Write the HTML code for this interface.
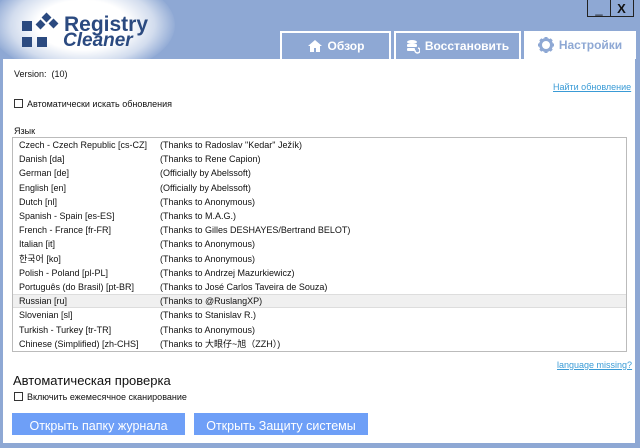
<!DOCTYPE html>
<html><head><meta charset="utf-8"><style>
*{margin:0;padding:0;box-sizing:border-box}
body{width:640px;height:448px;background:#8ea8d4;font-family:"Liberation Sans","Noto Sans CJK SC",sans-serif;position:relative;overflow:hidden;color:#111}
.glow{position:absolute;left:-10px;top:-25px;width:185px;height:100px;border-radius:50%;background:radial-gradient(ellipse at center,#fff 35%,rgba(255,255,255,0.6) 55%,rgba(142,168,212,0) 72%)}
.sq{position:absolute;background:#2b4a80}
.logo1{position:absolute;left:64px;top:13px;font-size:21px;font-weight:bold;color:#2b4a80;font-family:"Liberation Sans",sans-serif;letter-spacing:0px}
.logo2{position:absolute;left:63px;top:30px;font-size:19px;font-weight:bold;font-style:italic;color:#2b4a80;font-family:"Liberation Sans",sans-serif}
.wb{position:absolute;top:0;width:24px;height:17px;border:1px solid #222;border-top:none;font-weight:bold;font-size:13px;text-align:center;line-height:17px}
.tab{position:absolute;top:31px;height:28px;border:2px solid #fff;border-bottom:none;background:#8ea8d4;color:#fff;font-weight:bold;font-size:12px;display:flex;align-items:center;justify-content:center;gap:5px}
.tab.act{background:#fff;color:#8ea8d4;border:none}
.panel{position:absolute;left:3px;top:59px;width:632px;height:384px;background:#fff}
.t{position:absolute;font-size:9px;white-space:nowrap}
.cb{display:inline-block;width:9px;height:9px;border:1px solid #333;vertical-align:-1px;margin-right:4px}
.link{position:absolute;font-size:9px;color:#3a9bd6;text-decoration:underline;white-space:nowrap}
.list{position:absolute;left:12px;top:137px;width:615px;height:215px;border:1px solid #bbb}
.row{position:absolute;left:0;width:613px;height:14.2px;font-size:9px;line-height:14px}
.row span{position:absolute;left:6px}
.row span+span{left:147px}
.row.sel{background:#f0f0f0;border-top:1px solid #ddd;border-bottom:1px solid #ddd;line-height:12px}
.btn{position:absolute;top:413px;height:22px;background:#6e9ff7;color:#fff;font-size:12.5px;text-align:center;line-height:26px}
</style></head><body>
<div class="glow"></div>
<div class="sq" style="left:22px;top:21px;width:10px;height:10px"></div>
<div class="sq" style="left:22px;top:37px;width:10px;height:10px"></div>
<div class="sq" style="left:37px;top:37px;width:10px;height:10px"></div>
<div class="sq" style="left:37px;top:21px;width:7px;height:7px;transform:rotate(45deg)"></div>
<div class="sq" style="left:43px;top:14px;width:7px;height:7px;transform:rotate(45deg)"></div>
<div class="sq" style="left:50px;top:20px;width:7px;height:7px;transform:rotate(45deg)"></div>
<div class="logo1">Registry</div>
<div class="logo2">Cleaner</div>
<div class="wb" style="left:587px;font-weight:normal">_</div>
<div class="wb" style="left:610px;border-left:none">X</div>
<div class="tab" style="left:280px;width:111px"><svg width="16" height="14" viewBox="0 0 16 14"><path d="M8 1L1 7h2v6h4V9h2v4h4V7h2z" fill="#fff"/></svg>Обзор</div>
<div class="tab" style="left:394px;width:127px"><svg width="14" height="15" viewBox="0 0 14 15"><ellipse cx="6" cy="3" rx="5" ry="2" fill="#fff"/><rect x="1" y="5" width="10" height="3" rx="1" fill="#fff"/><rect x="1" y="9" width="8" height="3" rx="1" fill="#fff"/><path d="M9 11a2.5 2.5 0 1 0 3-2" stroke="#fff" fill="none" stroke-width="1.5"/></svg>Восстановить</div>
<div class="tab act" style="left:524px;width:112px;height:28px"><svg width="16" height="16" viewBox="0 0 16 16"><circle cx="8" cy="8" r="5.5" fill="none" stroke="#8ea8d4" stroke-width="3"/><g stroke="#8ea8d4" stroke-width="3"><path d="M8 0v3M8 13v3M0 8h3M13 8h3M2.3 2.3l2 2M11.7 11.7l2 2M2.3 13.7l2-2M11.7 4.3l2-2"/></g></svg>Настройки</div>
<div class="panel"></div>
<div class="t" style="left:14px;top:69px">Version: &nbsp;(10)</div>
<div class="link" style="left:553px;top:82px">Найти обновление</div>
<div class="t" style="left:14px;top:99px"><span class="cb"></span>Автоматически искать обновления</div>
<div class="t" style="left:14px;top:126px">Язык</div>
<div class="list">
<div class="row" style="top:0"><span>Czech - Czech Republic [cs-CZ]</span><span>(Thanks to Radoslav "Kedar" Ježík)</span></div>
<div class="row" style="top:14.2px"><span>Danish [da]</span><span>(Thanks to Rene Capion)</span></div>
<div class="row" style="top:28.4px"><span>German [de]</span><span>(Officially by Abelssoft)</span></div>
<div class="row" style="top:42.6px"><span>English [en]</span><span>(Officially by Abelssoft)</span></div>
<div class="row" style="top:56.8px"><span>Dutch [nl]</span><span>(Thanks to Anonymous)</span></div>
<div class="row" style="top:71px"><span>Spanish - Spain [es-ES]</span><span>(Thanks to M.A.G.)</span></div>
<div class="row" style="top:85.2px"><span>French - France [fr-FR]</span><span>(Thanks to Gilles DESHAYES/Bertrand BELOT)</span></div>
<div class="row" style="top:99.4px"><span>Italian [it]</span><span>(Thanks to Anonymous)</span></div>
<div class="row" style="top:113.6px"><span>한국어 [ko]</span><span>(Thanks to Anonymous)</span></div>
<div class="row" style="top:127.8px"><span>Polish - Poland [pl-PL]</span><span>(Thanks to Andrzej Mazurkiewicz)</span></div>
<div class="row" style="top:142px"><span>Português (do Brasil) [pt-BR]</span><span>(Thanks to José Carlos Taveira de Souza)</span></div>
<div class="row sel" style="top:156.2px"><span>Russian [ru]</span><span>(Thanks to @RuslangXP)</span></div>
<div class="row" style="top:170.4px"><span>Slovenian [sl]</span><span>(Thanks to Stanislav R.)</span></div>
<div class="row" style="top:184.6px"><span>Turkish - Turkey [tr-TR]</span><span>(Thanks to Anonymous)</span></div>
<div class="row" style="top:198.8px"><span>Chinese (Simplified) [zh-CHS]</span><span>(Thanks to 大眼仔~旭（ZZH）)</span></div>
</div>
<div class="link" style="left:557px;top:360px">language missing?</div>
<div class="t" style="left:13px;top:373px;font-size:13px">Автоматическая проверка</div>
<div class="t" style="left:14px;top:392px"><span class="cb"></span>Включить ежемесячное сканирование</div>
<div class="btn" style="left:12px;width:173px">Открыть папку журнала</div>
<div class="btn" style="left:194px;width:174px">Открыть Защиту системы</div>
</body></html>
